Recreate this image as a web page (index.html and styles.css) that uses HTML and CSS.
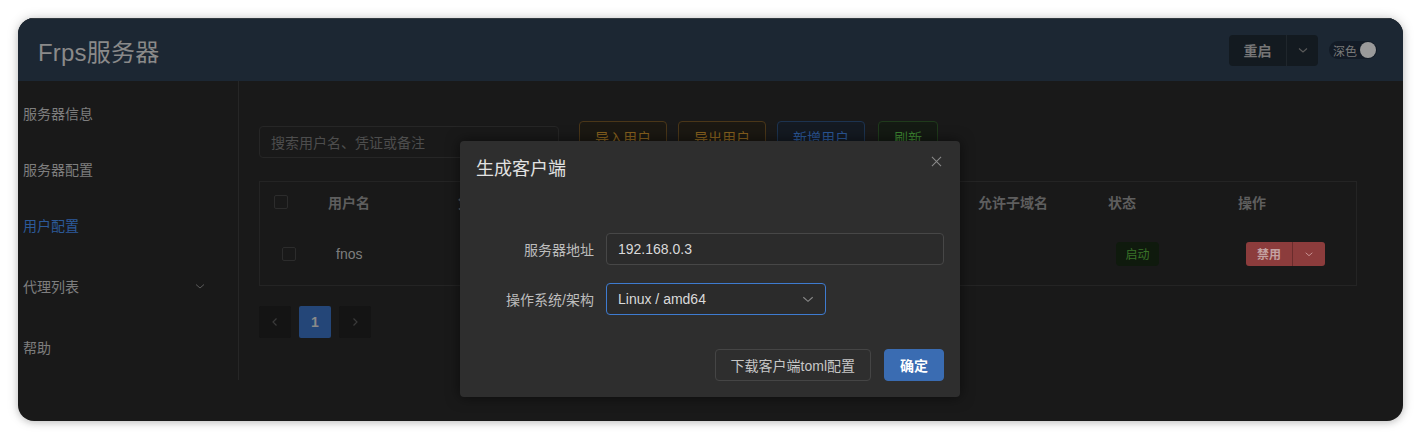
FILE: index.html
```html
<!DOCTYPE html>
<html lang="zh">
<head>
<meta charset="utf-8">
<title>Frps服务器</title>
<link rel="stylesheet" href="styles.css">
</head>
<body>
<div class="window">
  <header class="topbar">
    <div class="brand">Frps服务器</div>
    <div class="top-actions">
      <div class="split-btn">
        <span class="split-main">重启</span>
        <span class="split-arrow"><svg width="12" height="12" viewBox="0 0 12 12"><path d="M2 4.5 L6 8 L10 4.5" fill="none" stroke="#5a5a5a" stroke-width="1.1"/></svg></span>
      </div>
      <div class="switch"><span class="switch-text">深色</span><span class="knob"></span></div>
    </div>
  </header>
  <div class="main">
    <nav class="sidebar">
      <div class="nav-item">服务器信息</div>
      <div class="nav-item">服务器配置</div>
      <div class="nav-item active">用户配置</div>
      <div class="nav-item tall">代理列表<svg class="nav-chev" width="12" height="12" viewBox="0 0 12 12"><path d="M2 4.5 L6 8 L10 4.5" fill="none" stroke="#5a5a5a" stroke-width="1"/></svg></div>
      <div class="nav-item">帮助</div>
    </nav>
    <section class="content">
      <div class="toolbar">
        <div class="search">搜索用户名、凭证或备注</div>
        <div class="btn btn-orange">导入用户</div>
        <div class="btn btn-orange">导出用户</div>
        <div class="btn btn-blue">新增用户</div>
        <div class="btn btn-green">刷新</div>
      </div>
      <div class="table">
        <div class="row head">
          <div class="cell cb-cell"><span class="cb"></span></div>
          <div class="cell">用户名</div>
          <div class="cell">凭证</div>
          <div class="cell">备注</div>
          <div class="cell">端口</div>
          <div class="cell">连接数</div>
          <div class="cell">允许子域名</div>
          <div class="cell">状态</div>
          <div class="cell">操作</div>
        </div>
        <div class="row body">
          <div class="cell cb-cell"><span class="cb"></span></div>
          <div class="cell">fnos</div>
          <div class="cell"></div>
          <div class="cell"></div>
          <div class="cell"></div>
          <div class="cell"></div>
          <div class="cell"></div>
          <div class="cell"><span class="tag">启动</span></div>
          <div class="cell">
            <div class="danger-split"><span class="ds-main">禁用</span><span class="ds-arrow"><svg width="10" height="10" viewBox="0 0 12 12"><path d="M2 4.5 L6 8 L10 4.5" fill="none" stroke="#c99" stroke-width="1.1"/></svg></span></div>
          </div>
        </div>
      </div>
      <div class="pager">
        <span class="page-btn"><svg width="10" height="10" viewBox="0 0 10 10"><path d="M6.5 1.5 L3 5 L6.5 8.5" fill="none" stroke="#3a3a3a" stroke-width="1.2"/></svg></span>
        <span class="page-btn current">1</span>
        <span class="page-btn"><svg width="10" height="10" viewBox="0 0 10 10"><path d="M3.5 1.5 L7 5 L3.5 8.5" fill="none" stroke="#3a3a3a" stroke-width="1.2"/></svg></span>
      </div>
    </section>
  </div>

  <div class="overlay">
    <div class="dialog">
      <div class="dialog-head">
        <span class="dialog-title">生成客户端</span>
        <svg class="close" width="12" height="12" viewBox="0 0 12 12"><path d="M1 1 L11 11 M11 1 L1 11" stroke="#8a8a8a" stroke-width="1.1"/></svg>
      </div>
      <div class="form">
        <div class="form-row">
          <label class="form-label">服务器地址</label>
          <div class="input wide">192.168.0.3</div>
        </div>
        <div class="form-row">
          <label class="form-label">操作系统/架构</label>
          <div class="input select">Linux / amd64<svg class="sel-chev" width="14" height="14" viewBox="0 0 12 12"><path d="M2 4.5 L6 8 L10 4.5" fill="none" stroke="#8a8a8a" stroke-width="0.9"/></svg></div>
        </div>
      </div>
      <div class="dialog-foot">
        <div class="dbtn">下载客户端toml配置</div>
        <div class="dbtn primary">确定</div>
      </div>
    </div>
  </div>
</div>
</body>
</html>
```
FILE: styles.css
```css
* { box-sizing: border-box; }
html, body { margin: 0; padding: 0; }
body {
  background: #ffffff;
  font-family: "Liberation Sans", "Noto Sans CJK SC", sans-serif;
  width: 1421px;
  height: 439px;
  padding: 18px;
  overflow: hidden;
}
.window {
  position: relative;
  width: 1385px;
  height: 403px;
  border-radius: 16px;
  overflow: hidden;
  background: #191919;
  box-shadow: 0 0 12px rgba(0,0,0,0.18), 0 2px 6px rgba(0,0,0,0.12);
}
.topbar {
  height: 63px;
  background: #1c2733;
  border-top: 1px solid #333a40;
  display: flex;
  align-items: center;
  justify-content: space-between;
  padding: 0 26px 0 20px;
}
.brand {
  font-size: 24px;
  color: #8a8a8a;
  letter-spacing: 0.2px;
}
.top-actions { display: flex; align-items: center; gap: 11px; }
.split-btn {
  display: flex;
  height: 31px;
  background: #131a20;
  border-radius: 4px;
  overflow: hidden;
}
.split-main {
  width: 58px;
  display: flex; align-items: center; justify-content: center;
  font-size: 14px; color: #767676; font-weight: bold;
  border-right: 1px solid #1f262c;
}
.split-arrow {
  width: 31px;
  display: flex; align-items: center; justify-content: center;
}
.switch {
  width: 48px; height: 18px;
  background: #131b26;
  border-radius: 9px;
  display: flex; align-items: center;
  padding: 0 1px 0 4px;
  justify-content: space-between;
}
.switch-text { font-size: 12px; color: #7a7a7a; }
.knob { width: 16px; height: 16px; border-radius: 50%; background: #9a9a9a; }

.main { display: flex; height: 340px; }
.sidebar {
  width: 221px;
  height: 299px;
  border-right: 1px solid #262626;
  padding-top: 4px;
}
.nav-item {
  height: 56px;
  display: flex; align-items: center;
  padding-left: 5px; padding-right: 32px;
  font-size: 14px;
  color: #7e7e7e;
  justify-content: space-between;
}
.nav-item.tall { height: 66px; }
.nav-item.active { color: #2c5a99; }
.content { flex: 1; padding: 40px 0 0 20px; }
.toolbar { display: flex; align-items: flex-start; height: 60px; }
.search {
  width: 300px; height: 32px;
  margin-top: 5px;
  margin-right: 20px;
  border: 1px solid #262626;
  border-radius: 4px;
  font-size: 14px;
  color: #4d4d4d;
  padding-left: 11px;
  display: flex; align-items: center;
}
.btn {
  height: 32px; width: 88px;
  border-radius: 4px;
  font-size: 14px;
  display: flex; align-items: center; justify-content: center;
  margin-right: 11px;
  border: 1px solid;
}
.btn-orange { border-color: #4a3618; color: #86601e; background: #1b1812; }
.btn-blue { border-color: #1c3350; color: #2b5796; background: #141a22; width: 88px; margin-right: 13px; }
.btn-green { border-color: #1f3a1b; color: #3b8030; background: #141a13; width: 60px; }

.table {
  width: 1098px;
  border: 1px solid #242424;
}
.row { display: grid; grid-template-columns: 56px repeat(8, 130px); }
.row.head { height: 40px; align-items: center; }
.row.body { height: 63px; align-items: center; }
.cell { font-size: 14px; white-space: nowrap; }
.head .cell { color: #5e5e5e; font-weight: bold; padding-left: 12px; }
.body .cell { color: #7e7e7e; padding-left: 20px; }
.head .cb-cell { padding-left: 14px; }
.body .cb-cell { padding-left: 22px; }
.body .name-cell { padding-left: 19px; }
.cb { display: block; width: 14px; height: 14px; border: 1px solid #2c2c2c; border-radius: 2px; }
.tag {
  display: inline-flex; align-items: center; justify-content: center;
  width: 43px; height: 24px;
  background: #0f1a0d;
  border-radius: 4px;
  color: #3a7429;
  font-size: 12px;
}
.danger-split {
  display: inline-flex; height: 24px; width: 79px;
  background: #8c3c3c; border-radius: 3px; overflow: hidden;
}
.ds-main {
  width: 47px; display: flex; align-items: center; justify-content: center;
  font-size: 12px; color: #c4a2a2; font-weight: bold;
  border-right: 1px solid #6a2c2c;
}
.ds-arrow { flex: 1; display: flex; align-items: center; justify-content: center; }
.pager { display: flex; gap: 8px; margin-top: 20px; }
.page-btn {
  width: 32px; height: 32px;
  background: #141414;
  border-radius: 2px;
  display: flex; align-items: center; justify-content: center;
  font-size: 14px; font-weight: bold; color: #7a7a7a;
}
.page-btn.current { background: #244678; color: #8a8a8a; }

.overlay { position: absolute; inset: 0; }
.dialog {
  margin: 123px 0 0 442px;
  width: 500px;
  height: 256px;
  background: #2e2e2e;
  border-radius: 4px;
  box-shadow: 0 0 14px rgba(0,0,0,0.55);
  padding: 16px;
  display: flex; flex-direction: column;
}
.dialog-head { display: flex; justify-content: space-between; align-items: flex-start; height: 76px; }
.dialog-title { font-size: 18px; color: #e2e2e2; line-height: 24px; }
.close { margin-top: -1px; margin-right: 2px; width: 11px; height: 11px; }
.form { display: flex; flex-direction: column; gap: 18px; }
.form-row { display: flex; align-items: center; }
.form-label { width: 130px; padding-right: 12px; text-align: right; font-size: 14px; color: #bdbdbd; }
.input {
  height: 32px;
  border: 1px solid #474747;
  border-radius: 4px;
  background: #2b2b2b;
  font-size: 14px; color: #dadada;
  display: flex; align-items: center;
  padding-left: 11px;
}
.input.wide { width: 338px; }
.input.select { width: 220px; border-color: #3e7bd0; justify-content: space-between; padding-right: 10px; }
.dialog-foot { margin-top: auto; display: flex; justify-content: flex-end; gap: 13px; }
.dbtn {
  height: 32px;
  padding: 0 15px;
  border: 1px solid #454545;
  border-radius: 4px;
  font-size: 14px; color: #c6c6c6;
  display: flex; align-items: center; justify-content: center;
}
.dbtn.primary { background: #3a6cb2; border-color: #3a6cb2; color: #ffffff; width: 60px; font-weight: bold; }
```
